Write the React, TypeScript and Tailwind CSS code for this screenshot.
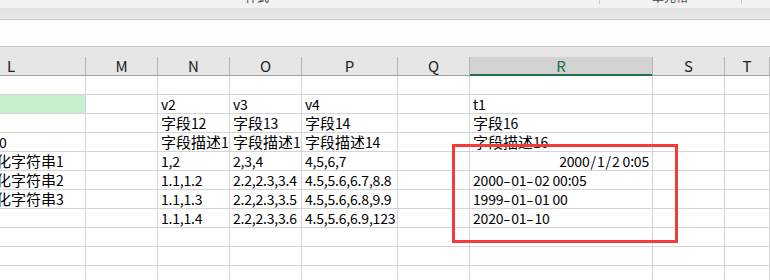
import React from "react";

type Cell = { text?: string; right?: boolean; green?: boolean; shift?: string };

const cols = ["L", "M", "N", "O", "P", "Q", "R", "S", "T"];

const rows: Cell[][] = [
  [{}, {}, {}, {}, {}, {}, {}, {}, {}],
  [{ green: true }, {}, { text: "v2" }, { text: "v3" }, { text: "v4" }, {}, { text: "t1" }, {}, {}],
  [{}, {}, { text: "字段12" }, { text: "字段13" }, { text: "字段14" }, {}, { text: "字段16" }, {}, {}],
  [{ text: "0", shift: "-ml-[4px]" }, {}, { text: "字段描述12" }, { text: "字段描述13" }, { text: "字段描述14" }, {}, { text: "字段描述16" }, {}, {}],
  [{ text: "化字符串1", shift: "-ml-[7px]" }, {}, { text: "1,2" }, { text: "2,3,4" }, { text: "4,5,6,7" }, {}, { text: "2000/1/2 0:05", right: true }, {}, {}],
  [{ text: "化字符串2", shift: "-ml-[7px]" }, {}, { text: "1.1,1.2" }, { text: "2.2,2.3,3.4" }, { text: "4.5,5.6,6.7,8.8" }, {}, { text: "2000-01-02 00:05" }, {}, {}],
  [{ text: "化字符串3", shift: "-ml-[7px]" }, {}, { text: "1.1,1.3" }, { text: "2.2,2.3,3.5" }, { text: "4.5,5.6,6.8,9.9" }, {}, { text: "1999-01-01 00" }, {}, {}],
  [{}, {}, { text: "1.1,1.4" }, { text: "2.2,2.3,3.6" }, { text: "4.5,5.6,6.9,123" }, {}, { text: "2020-01-10" }, {}, {}],
  [{}, {}, {}, {}, {}, {}, {}, {}, {}],
  [{}, {}, {}, {}, {}, {}, {}, {}, {}],
  [{}, {}, {}, {}, {}, {}, {}, {}, {}],
];

const grid = "grid grid-cols-[86px_72px_72px_72px_96px_72px_183px_72px_1fr]";

// Latin runs are drawn a bit smaller than CJK ones, like the sheet's font
function CellText({ text }: { text: string }) {
  const parts = text.split(/([\u4e00-\u9fff]+|-|\/)/).filter(Boolean);
  return (
    <>
      {parts.map((p, i) =>
        /[\u4e00-\u9fff]/.test(p) ? (
          <span key={i} className="text-[15px]">{p}</span>
        ) : p === "-" ? (
          <span key={i} className="inline-block w-[8px] text-center text-[14px] scale-x-150">-</span>
        ) : p === "/" ? (
          <span key={i} className="text-[14px] mx-[1px]">/</span>
        ) : (
          <span key={i} className="text-[14px] tracking-[-0.2px]">{p}</span>
        )
      )}
    </>
  );
}

export default function App() {
  return (
    <div
      className="relative w-[770px] h-[280px] overflow-hidden bg-white text-black"
      style={{ fontFamily: '"Noto Sans CJK SC", "Noto Sans", sans-serif' }}
    >
      {/* ribbon bottom edge */}
      <div className="h-[8px] bg-[#f3f2f1] overflow-hidden flex text-[12px] leading-[12px] text-[#444]">
        <div className="w-[245px]" />
        <div className="-mt-[9px]">样式</div>
        <div className="w-[330px]" />
        <div className="w-px h-[4px] bg-[#c8c8c8]" />
        <div className="w-[52px]" />
        <div className="-mt-[9px]">单元格</div>
        <div className="w-[53px]" />
        <div className="w-px h-[4px] bg-[#c8c8c8]" />
      </div>
      <div className="h-[12px] bg-gradient-to-b from-[#e3e3e3] to-[#e8e8e8] border-b border-[#c9c9c9]" />
      {/* formula bar */}
      <div className="h-[27px] bg-[#fdfdfd] border-b border-[#c6c6c6]" />
      <div className="h-[10px] bg-[#e6e6e6]" />

      {/* column headers */}
      <div className={`${grid} h-[19px] bg-[#e6e6e6] border-b border-[#9e9e9e] text-[15px] leading-[18px] text-[#222]`}>
        {cols.map((c, i) => (
          <div
            key={c}
            className={
              c === "R"
                ? "relative bg-[#d2d2d2] text-[#217346] text-center border-r border-[#b4b4b4] after:absolute after:left-0 after:right-0 after:-bottom-px after:h-[2px] after:bg-[#217346]"
                : i === 0
                ? "pl-[7px] border-r border-[#b4b4b4]"
                : "text-center border-r border-[#b4b4b4]"
            }
          >
            {c}
          </div>
        ))}
      </div>

      {/* cells */}
      <div className="text-[15px] leading-[18px]">
        {rows.map((r, ri) => (
          <div key={ri} className={`${grid} h-[19px]`}>
            {r.map((cell, ci) => (
              <div
                key={ci}
                className={`flex items-end overflow-hidden whitespace-nowrap border-r border-b border-[#d4d4d4] px-[3px] ${
                  cell.green ? "bg-[#c6efce]" : ""
                } ${cell.right ? "justify-end" : ""}`}
              >
                {cell.text && (
                  <span className={cell.shift ?? ""}>
                    <CellText text={cell.text} />
                  </span>
                )}
              </div>
            ))}
          </div>
        ))}
      </div>

      {/* red annotation box */}
      <div className="absolute left-[452px] top-[144px] w-[226px] h-[99px] border-[3px] border-[#f23b3b]" />
    </div>
  );
}
